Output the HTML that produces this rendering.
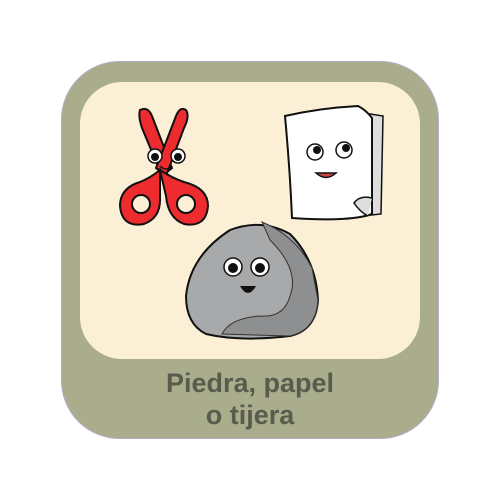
<!DOCTYPE html>
<html><head><style>
html,body{margin:0;padding:0;background:#fff;width:500px;height:500px;overflow:hidden}
</style></head><body>
<svg width="500" height="500" viewBox="0 0 500 500" xmlns="http://www.w3.org/2000/svg">
<rect x="61.5" y="61.5" width="377" height="377" rx="58" fill="#a9ad8c" stroke="#b8a9c9" stroke-width="1"/>
<rect x="80" y="82" width="340" height="277" rx="42" fill="#fbf0d6"/>
<!-- scissors -->
<g stroke="#111" stroke-width="2" fill="#ee2b2e">
<path d="M140 110 Q148 106 152 116 L172 168 L162 176 L142 128 Q138 116 140 110Z"/>
<path d="M186 110 Q180 106 176 116 L156 168 L166 176 L184 128 Q190 116 186 110Z"/>
<path d="M160 170 Q150 178 140 182 Q120 188 120 206 Q122 228 144 224 Q160 218 160 200Z"/>
<path d="M160 170 Q172 178 184 182 Q208 188 208 206 Q206 228 184 224 Q168 218 166 196Z"/>
</g>
<circle cx="141" cy="204" r="9" fill="#fbf0d6" stroke="#111" stroke-width="2"/>
<circle cx="186" cy="204" r="9" fill="#fbf0d6" stroke="#111" stroke-width="2"/>
<circle cx="155" cy="156" r="7" fill="#fff" stroke="#111" stroke-width="1.5"/><circle cx="155" cy="157" r="4" fill="#111"/>
<circle cx="178" cy="156" r="7" fill="#fff" stroke="#111" stroke-width="1.5"/><circle cx="178" cy="157" r="4" fill="#111"/>
<path d="M160 166 Q166 172 172 166" stroke="#111" stroke-width="1.5" fill="none"/>
<!-- paper -->
<path d="M364 113 L383 116 L381 214 L362 216Z" fill="#ddd" stroke="#111" stroke-width="1.5"/>
<path d="M285 116 Q320 108 358 106 Q366 110 372 118 L372 214 Q350 222 292 218 Q290 170 285 116Z" fill="#fff" stroke="#111" stroke-width="2"/>
<path d="M372 198 Q360 195 354 203 Q360 212 368 216" fill="#ddd" stroke="#111" stroke-width="1.5"/>
<circle cx="315" cy="152" r="8" fill="#fff" stroke="#111" stroke-width="1.5"/><circle cx="317" cy="150" r="4" fill="#111"/>
<circle cx="344" cy="150" r="8" fill="#fff" stroke="#111" stroke-width="1.5"/><circle cx="346" cy="148" r="4" fill="#111"/>
<path d="M316 173 Q326 182 336 173Z" fill="#c44" stroke="#111" stroke-width="1.5"/>
<!-- rock -->
<path d="M230 230 Q262 218 290 234 Q316 260 318 300 Q316 330 290 336 Q240 342 206 334 Q186 324 186 296 Q190 256 230 230Z" fill="#a7a9aa" stroke="#111" stroke-width="2"/>
<path d="M262 222 Q296 236 312 268 L318 300 Q316 330 290 336 L222 334 Q230 318 260 316 Q284 318 290 296 Q300 270 270 240Z" fill="#8d8f90" stroke="#333" stroke-width="1"/>
<circle cx="233" cy="267" r="9" fill="#fff" stroke="#111" stroke-width="1.5"/><circle cx="233" cy="268" r="5" fill="#111"/>
<circle cx="260" cy="267" r="9" fill="#fff" stroke="#111" stroke-width="1.5"/><circle cx="260" cy="268" r="5" fill="#111"/>
<path d="M240 286 Q248 300 256 286Z" fill="#111"/>
<g font-family="Liberation Sans, sans-serif" font-weight="bold" fill="#5a5b4d" text-anchor="middle" font-size="27">
<text x="250" y="392">Piedra, papel</text>
<text x="250" y="424">o tijera</text>
</g>
</svg>
</body></html>
